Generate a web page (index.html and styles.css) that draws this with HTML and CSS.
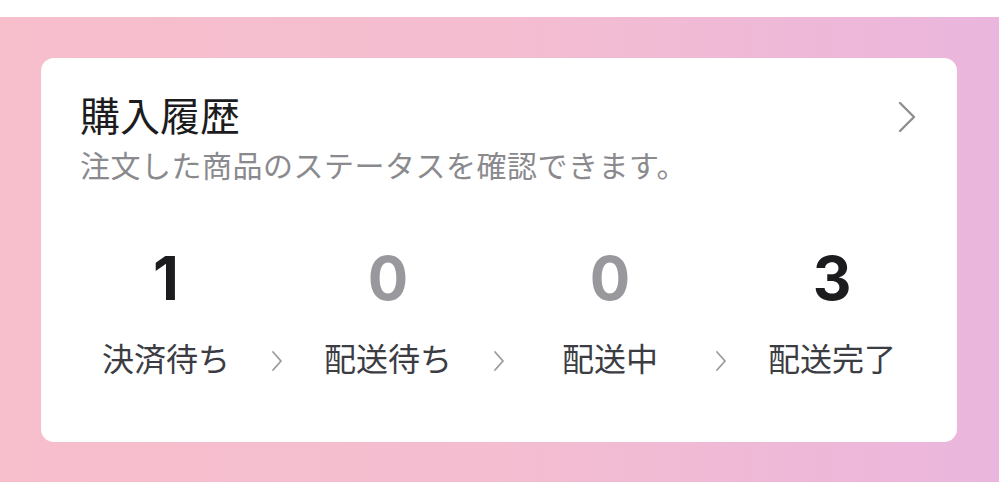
FILE: index.html
```html
<!DOCTYPE html>
<html lang="ja">
<head>
<meta charset="utf-8">
<link rel="stylesheet" href="styles.css">
</head>
<body>
<div class="bg">
  <section class="card">
    <header class="head">
      <div class="head-text">
        <h1 class="title">購入履歴</h1>
        <p class="sub">注文した商品のステータスを確認できます。</p>
      </div>
      <svg class="chev-lg" width="20" height="32" viewBox="0 0 20 32"><path d="M3 2 L17 16 L3 30" fill="none" stroke="#8e8e93" stroke-width="2.4" stroke-linecap="round" stroke-linejoin="round"/></svg>
    </header>
    <div class="stats">
      <div class="stat">
        <div class="num dark">1</div>
        <div class="label">決済待ち</div>
      </div>
      <div class="stat">
        <svg class="chev-sm" width="12" height="22" viewBox="0 0 12 22"><path d="M2 2 L10 11 L2 20" fill="none" stroke="#9a9a9f" stroke-width="1.8" stroke-linecap="round" stroke-linejoin="round"/></svg>
        <div class="num light">0</div>
        <div class="label">配送待ち</div>
      </div>
      <div class="stat">
        <svg class="chev-sm" width="12" height="22" viewBox="0 0 12 22"><path d="M2 2 L10 11 L2 20" fill="none" stroke="#9a9a9f" stroke-width="1.8" stroke-linecap="round" stroke-linejoin="round"/></svg>
        <div class="num light">0</div>
        <div class="label">配送中</div>
      </div>
      <div class="stat">
        <svg class="chev-sm" width="12" height="22" viewBox="0 0 12 22"><path d="M2 2 L10 11 L2 20" fill="none" stroke="#9a9a9f" stroke-width="1.8" stroke-linecap="round" stroke-linejoin="round"/></svg>
        <div class="num dark">3</div>
        <div class="label">配送完了</div>
      </div>
    </div>
  </section>
</div>
</body>
</html>
```
FILE: styles.css
```css
* { box-sizing: border-box; }
html, body { margin: 0; padding: 0; background: #ffffff; }
body { font-family: "Noto Sans CJK JP", "Noto Sans", sans-serif; }
.bg {
  margin-top: 17px;
  height: 465px;
  background: linear-gradient(90deg, #f7bfcc 0%, #f4bdd0 50%, #eab6dd 100%);
  padding: 41px 42px 0 41px;
}
.card {
  background: #ffffff;
  border-radius: 13px;
  height: 384px;
  padding: 27px 14px 0 14px;
}
.head {
  display: flex;
  justify-content: space-between;
  align-items: flex-start;
  padding: 0 26px 0 25px;
}
.title {
  margin: 0;
  font-size: 40px;
  line-height: 58px;
  font-weight: 400;
  color: #1c1c1e;
}
.sub {
  margin: 3px 0 0 0;
  font-size: 30px;
  line-height: 36px;
  letter-spacing: 0.5px;
  color: #8a8a8e;
  font-weight: 400;
}
.chev-lg { margin-top: 16px; }
.stats {
  display: grid;
  grid-template-columns: repeat(4, 1fr);
  margin-top: 66px;
}
.stat {
  position: relative;
  display: flex;
  flex-direction: column;
  align-items: center;
}
.chev-sm {
  position: absolute;
  left: -6px;
  top: 102px;
}
.num {
  font-family: Inter, "Noto Sans", sans-serif;
  font-size: 60px;
  line-height: 60px;
  font-weight: 700;
}
.num.dark { color: #1c1c1e; }
.num.light { color: #98989d; }
.label {
  margin-top: 29px;
  font-size: 32px;
  line-height: 40px;
  color: #3c3c43;
}
```
